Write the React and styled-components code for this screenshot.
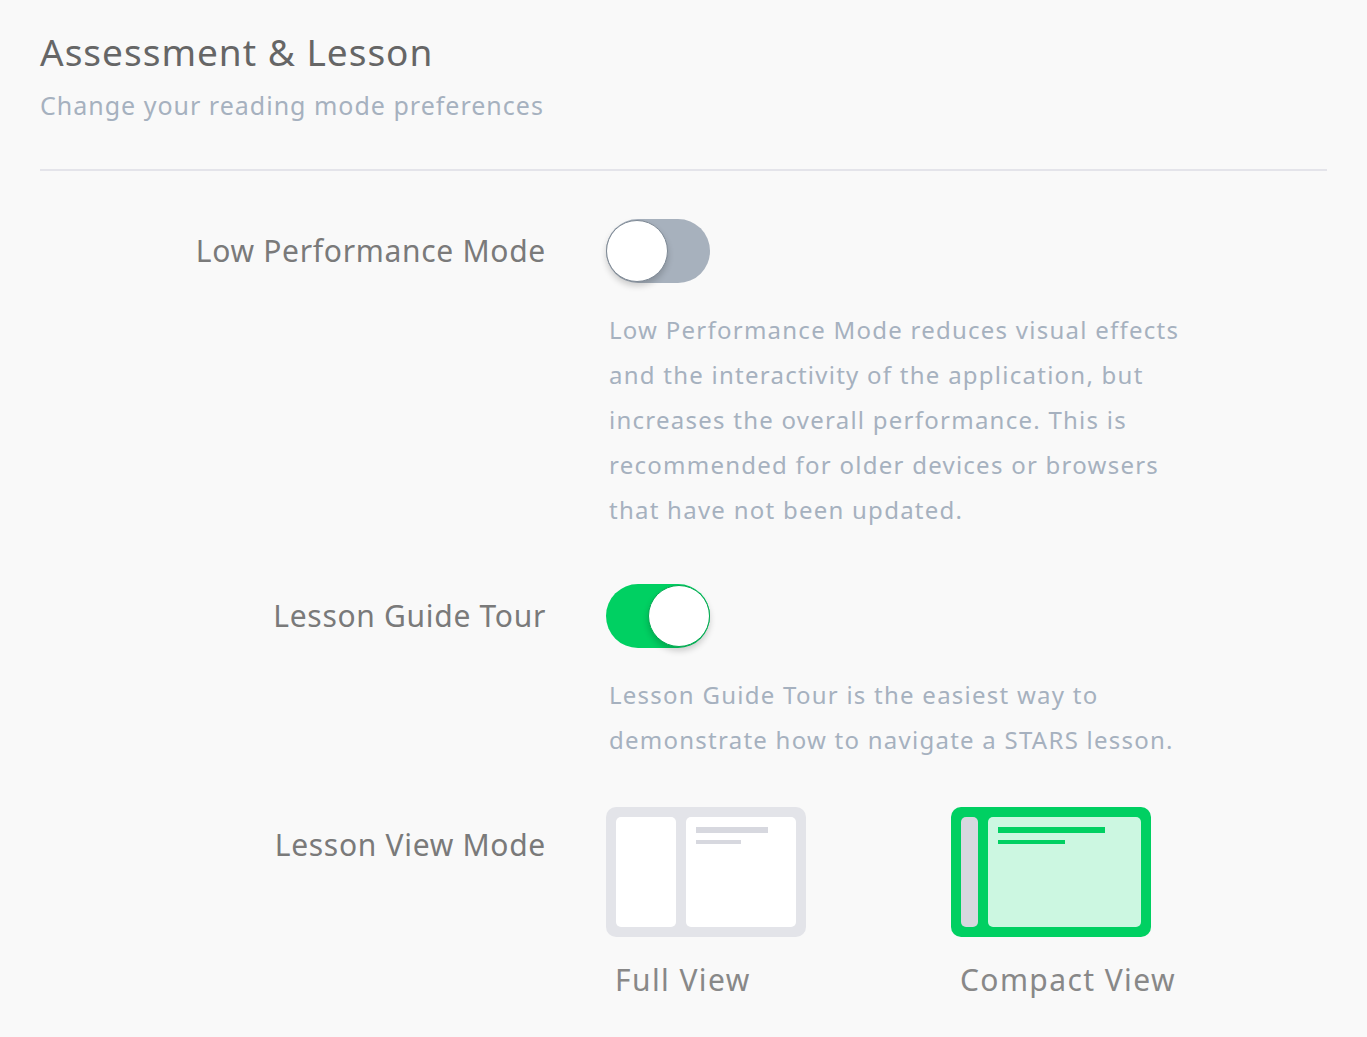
import styled, { createGlobalStyle } from "styled-components";

const Green = "#00d062";
const Muted = "#a6b1bf";
const LabelColor = "#7a7a7a";
const FontStack = `"Noto Sans", "Open Sans", sans-serif`;

function Toggle({ on }) {
  return (
    <Track on={on ? 1 : 0}>
      <Knob on={on ? 1 : 0} />
    </Track>
  );
}

function FullPreview() {
  return (
    <Card>
      <Side />
      <Pane>
        <Line width="72px" />
        <Line width="45px" thin />
      </Pane>
    </Card>
  );
}

function CompactPreview() {
  return (
    <Card active>
      <Side narrow />
      <Pane active>
        <Line width="107px" active />
        <Line width="67px" thin active />
      </Pane>
    </Card>
  );
}

function App() {
  return (
    <Page>
      <GlobalStyle />
      <Header>
        <Title>Assessment &amp; Lesson</Title>
        <Subtitle>Change your reading mode preferences</Subtitle>
      </Header>
      <Divider />
      <Settings>
        <Row>
          <Label>Low Performance Mode</Label>
          <Control>
            <Toggle />
            <Description>
              Low Performance Mode reduces visual effects and the interactivity
              of the application, but increases the overall performance. This
              is recommended for older devices or browsers that have not been
              updated.
            </Description>
          </Control>
        </Row>
        <Row space="52px">
          <Label>Lesson Guide Tour</Label>
          <Control>
            <Toggle on />
            <Description>
              Lesson Guide Tour is the easiest way to demonstrate how to
              navigate a STARS lesson.
            </Description>
          </Control>
        </Row>
        <Row space="45px">
          <Label offset>Lesson View Mode</Label>
          <Modes>
            <Mode>
              <FullPreview />
              <ModeName>Full View</ModeName>
            </Mode>
            <Mode>
              <CompactPreview />
              <ModeName>Compact View</ModeName>
            </Mode>
          </Modes>
        </Row>
      </Settings>
    </Page>
  );
}

const GlobalStyle = createGlobalStyle`
  body {
    margin: 0;
    background-color: #f9f9f9;
    font-family: ${FontStack};
  }
`;

const Page = styled.div`
  padding: 28px 40px 40px 40px;
  min-height: 1037px;
  box-sizing: border-box;
`;
const Header = styled.header`
  padding-bottom: 44px;
`;
const Title = styled.h1`
  margin: 0;
  font-weight: 400;
  font-size: 37px;
  letter-spacing: 1px;
  line-height: 48px;
  color: #666;
`;
const Subtitle = styled.div`
  margin-top: 9px;
  font-size: 25px;
  letter-spacing: 1px;
  line-height: 40px;
  color: ${Muted};
`;
const Divider = styled.hr`
  margin: 0;
  border: none;
  height: 2px;
  background: #e4e4ea;
`;
const Settings = styled.div`
  padding-top: 48px;
  display: flex;
  flex-direction: column;
`;
const Row = styled.div`
  display: grid;
  grid-template-columns: 506px 1fr;
  column-gap: 60px;
  align-items: start;
  margin-top: ${(p) => p.space || "0"};
`;
const Label = styled.div`
  text-align: right;
  font-size: 30px;
  letter-spacing: 0.7px;
  line-height: 64px;
  color: ${LabelColor};
  padding-top: ${(p) => (p.offset ? "6px" : "0")};
`;
const Control = styled.div`
  display: flex;
  flex-direction: column;
  align-items: flex-start;
`;
const Track = styled.div`
  width: 104px;
  height: 64px;
  border-radius: 32px;
  background: ${(p) => (p.on ? Green : "#a7b1bd")};
  display: flex;
  align-items: center;
  justify-content: ${(p) => (p.on ? "flex-end" : "flex-start")};
  cursor: pointer;
`;
const Knob = styled.div`
  width: 60px;
  height: 60px;
  border-radius: 50%;
  background: #fff;
  border: 1px solid ${(p) => (p.on ? "#00a84f" : "#7d8894")};
  box-shadow: 0 4px 6px rgba(0, 0, 0, 0.18);
`;
const Description = styled.p`
  margin: 24px 0 0 3px;
  max-width: 590px;
  font-size: 24px;
  letter-spacing: 1.25px;
  line-height: 45px;
  color: ${Muted};
`;
const Modes = styled.div`
  display: flex;
  gap: 145px;
`;
const Mode = styled.div`
  display: flex;
  flex-direction: column;
`;
const ModeName = styled.div`
  margin-top: 21px;
  padding-left: 9px;
  font-size: 30px;
  letter-spacing: 1.4px;
  line-height: 44px;
  color: #888;
`;
const Card = styled.div`
  width: 200px;
  height: 130px;
  box-sizing: border-box;
  padding: 10px;
  border-radius: 10px;
  background: ${(p) => (p.active ? Green : "#e3e4e9")};
  display: flex;
  gap: 10px;
  cursor: pointer;
`;
const Side = styled.div`
  width: ${(p) => (p.narrow ? "17px" : "60px")};
  border-radius: 5px;
  background: ${(p) => (p.narrow ? "#d7d8df" : "#fff")};
`;
const Pane = styled.div`
  flex: 1;
  border-radius: 5px;
  background: ${(p) => (p.active ? "#ccf7e1" : "#fff")};
  padding: 10px;
  display: flex;
  flex-direction: column;
  gap: 7px;
`;
const Line = styled.div`
  width: ${(p) => p.width};
  height: ${(p) => (p.thin ? "4px" : "6px")};
  background: ${(p) => (p.active ? Green : "#d7d8df")};
`;

export default App;
